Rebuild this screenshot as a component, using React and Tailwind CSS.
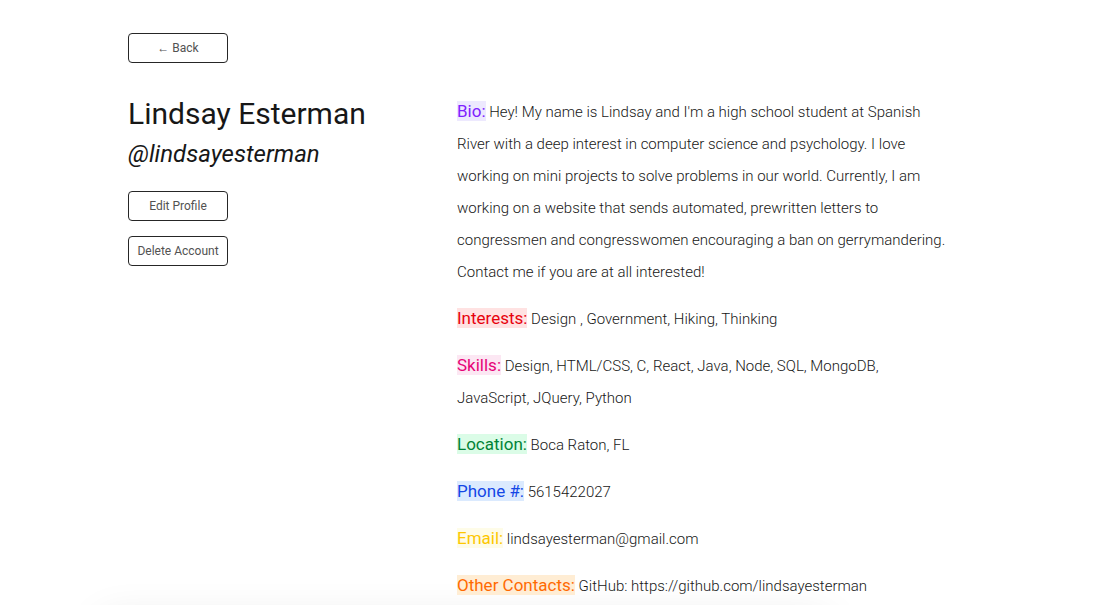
import React from 'react'

const fields = [
  {
    label: 'Bio:',
    cls: 'bg-violet-100 text-violet-600',
    text: "Hey! My name is Lindsay and I'm a high school student at Spanish River with a deep interest in computer science and psychology. I love working on mini projects to solve problems in our world. Currently, I am working on a website that sends automated, prewritten letters to congressmen and congresswomen encouraging a ban on gerrymandering. Contact me if you are at all interested!",
  },
  { label: 'Interests:', cls: 'bg-red-100 text-red-600', text: 'Design , Government, Hiking, Thinking' },
  {
    label: 'Skills:',
    cls: 'bg-pink-100 text-pink-600',
    text: 'Design, HTML/CSS, C, React, Java, Node, SQL, MongoDB, JavaScript, JQuery, Python',
  },
  { label: 'Location:', cls: 'bg-green-100 text-green-700', text: 'Boca Raton, FL' },
  { label: 'Phone #:', cls: 'bg-blue-100 text-blue-700', text: '5615422027' },
  { label: 'Email:', cls: 'bg-yellow-50 text-yellow-400', text: 'lindsayesterman@gmail.com' },
  { label: 'Other Contacts:', cls: 'bg-orange-100 text-orange-500', text: 'GitHub: https://github.com/lindsayesterman' },
]

function OutlineButton({ children }) {
  return (
    <button className="flex h-[30px] w-[100px] items-center justify-center rounded-[4px] border border-neutral-800 bg-white text-[12px] text-neutral-600">
      {children}
    </button>
  )
}

export default function App() {
  return (
    <div className="min-h-screen bg-white font-['Roboto',sans-serif] text-neutral-900">
      <div className="pl-[128px] pt-[33px]">
        <OutlineButton>← Back</OutlineButton>

        <div className="mt-[33px] flex">
          <div className="w-[329px] shrink-0">
            <h1 className="text-[30px] leading-[36px] font-normal text-neutral-900">Lindsay Esterman</h1>
            <h2 className="mt-[6px] text-[24px] leading-8 italic text-neutral-900">@lindsayesterman</h2>
            <div className="mt-[21px] flex flex-col gap-[15px]">
              <OutlineButton>Edit Profile</OutlineButton>
              <OutlineButton>Delete Account</OutlineButton>
            </div>
          </div>

          <div className="w-[490px]">
            {fields.map((f) => (
              <p key={f.label} className="mb-[15px] text-[15px] leading-8 font-light text-neutral-900">
                <span className={`text-[17px] leading-none font-normal ${f.cls}`}>{f.label}</span> {f.text}
              </p>
            ))}
          </div>
        </div>
      </div>

      <div className="ml-[100px] h-40 w-[730px] rounded-lg bg-white shadow-[0_0_40px_rgba(0,0,0,0.09)]" />
    </div>
  )
}
